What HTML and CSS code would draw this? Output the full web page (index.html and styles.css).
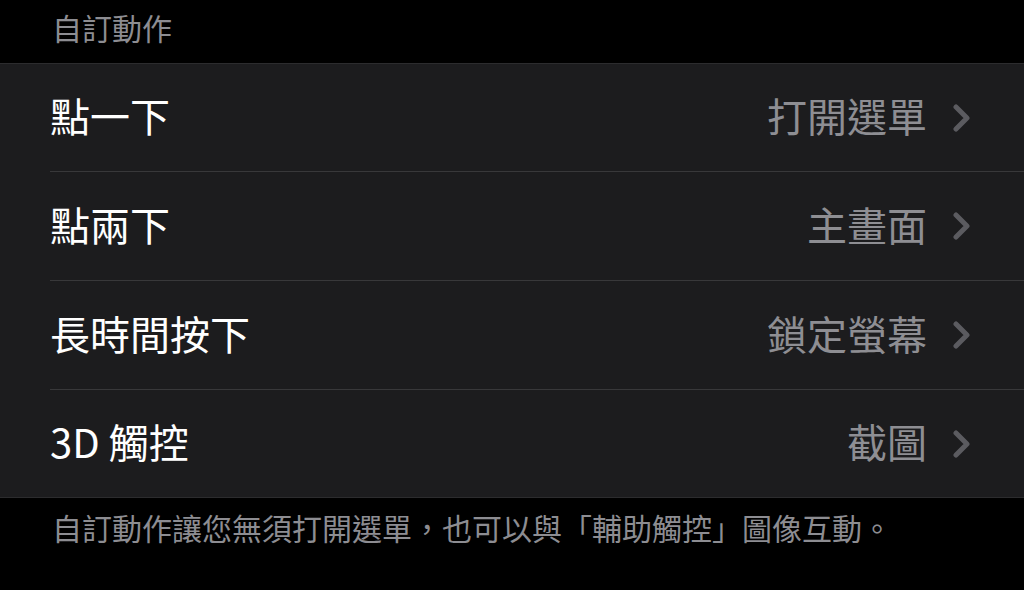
FILE: index.html
```html
<!DOCTYPE html>
<html lang="zh-Hant">
<head>
<meta charset="utf-8">
<link rel="stylesheet" href="styles.css">
</head>
<body>
<div class="header">自訂動作</div>
<div class="group">
  <div class="row"><span class="label">點一下</span><span class="value">打開選單</span><svg class="chev" viewBox="0 0 20 28"><path d="M4 3 L15 14 L4 25" /></svg></div>
  <div class="row"><span class="label">點兩下</span><span class="value">主畫面</span><svg class="chev" viewBox="0 0 20 28"><path d="M4 3 L15 14 L4 25" /></svg></div>
  <div class="row"><span class="label">長時間按下</span><span class="value">鎖定螢幕</span><svg class="chev" viewBox="0 0 20 28"><path d="M4 3 L15 14 L4 25" /></svg></div>
  <div class="row"><span class="label">3D 觸控</span><span class="value">截圖</span><svg class="chev" viewBox="0 0 20 28"><path d="M4 3 L15 14 L4 25" /></svg></div>
</div>
<div class="footer">自訂動作讓您無須打開選單，也可以與「輔助觸控」圖像互動。</div>
</body>
</html>
```
FILE: styles.css
```css
html, body {
  margin: 0;
  padding: 0;
  background: #000;
  width: 1024px;
  height: 590px;
  overflow: hidden;
  font-family: "Noto Sans CJK TC", "Noto Sans", sans-serif;
}
.header {
  height: 63px;
  box-sizing: border-box;
  padding: 9px 0 0 52px;
  font-size: 30px;
  line-height: 36px;
  color: #8d8d92;
}
.group {
  background: #1c1c1e;
  border-top: 1px solid #2c2c2e;
  border-bottom: 1px solid #2c2c2e;
  padding-left: 50px;
}
.row {
  height: 108px;
  display: flex;
  align-items: center;
  padding: 0 52px 0 0;
  border-bottom: 1px solid #38383a;
}
.row:first-child,
.row:last-child {
  height: 107px;
}
.row:last-child {
  border-bottom: none;
}
.label {
  flex: 1;
  font-size: 40px;
  color: #ffffff;
  margin-top: -5px;
}
.value {
  font-size: 40px;
  color: #8e8e93;
  margin-right: 25px;
  margin-top: -5px;
}
.chev {
  width: 20px;
  height: 28px;
  fill: none;
  stroke: #5b5b60;
  stroke-width: 5;
  stroke-linecap: round;
  stroke-linejoin: round;
}
.footer {
  padding: 9px 0 0 52px;
  font-size: 30px;
  line-height: 40px;
  color: #8d8d92;
}
```
